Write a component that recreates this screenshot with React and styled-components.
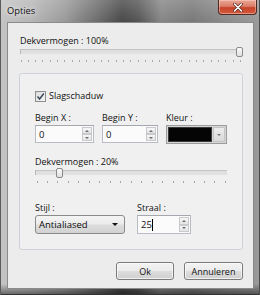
import React from "react";
import styled, { createGlobalStyle } from "styled-components";

const Global = createGlobalStyle`
  html, body { margin: 0; padding: 0; background: #6a6a6a; }
  body { font-family: "Open Sans", "Noto Sans", sans-serif; }
  * { box-sizing: border-box; }
`;

const Window = styled.div`
  width: 260px;
  height: 295px;
  display: flex;
  flex-direction: column;
  padding: 0 6px 6px 7px;
  background:
    linear-gradient(180deg, rgba(0,0,0,0) 0, rgba(0,0,0,0) 284px, rgba(0,0,0,0.5) 295px),
    linear-gradient(180deg, rgba(255,255,255,0.18) 0, rgba(255,255,255,0) 22px),
    linear-gradient(90deg, #c4c4c4 0%, #b6b6b6 12%, #999 25%, #6a6a6a 38%, #484848 47%, #555 53%, #858585 62%, #787878 74%, #8a8a8a 86%, #9a9a9a 100%);
  box-shadow: inset 1px 0 0 #5a5a5a, inset -1px 0 0 #4a4a4a, inset 0 -1px 0 #333;
`;

const TitleBar = styled.div`
  height: 22px;
  display: flex;
  align-items: flex-start;
`;

const Title = styled.div`
  margin-top: 4px;
  font-size: 9.3px;
  line-height: 13px;
  color: #111;
  text-shadow: 0 0 4px rgba(255,255,255,0.9), 0 0 8px rgba(255,255,255,0.6);
`;

const CloseButton = styled.div`
  margin-left: auto;
  margin-right: -3px;
  width: 39px;
  height: 15px;
  border: 1px solid #4e2a22;
  border-top: none;
  border-radius: 0 0 4px 4px;
  background: linear-gradient(180deg, #eaa696 0%, #dc7d68 45%, #c7432a 55%, #d55a3c 100%);
  display: flex;
  align-items: center;
  justify-content: center;
  box-shadow: inset 0 0 0 1px rgba(255,220,210,0.45);
`;

const Client = styled.div`
  flex: 1;
  display: flex;
  flex-direction: column;
  border: 1px solid #8a8a8a;
  background: #ececec;
  padding: 12px 10px 0 12px;
`;

const Label = styled.div`
  font-size: 9px;
  line-height: 12px;
  color: #111;
  white-space: nowrap;
`;

const SliderWrap = styled.div`
  position: relative;
  width: ${p => p.$w}px;
  padding-top: 2px;
  height: 16px;
`;

const Track = styled.div`
  height: 5px;
  width: ${p => p.$tw}px;
  background: linear-gradient(180deg, #c4c4c4 0, #c4c4c4 1px, #dedede 1px, #e2e2e2 100%);
  border-left: 1px solid #b8b8b8;
`;

const Ticks = styled.div`
  display: flex;
  justify-content: space-between;
  margin-top: 6px;
  padding: 0 ${p => p.$pr}px 0 ${p => p.$pl}px;
`;

const Tick = styled.span`
  width: 1px;
  height: 2px;
  background: #a8a8a8;
`;

const Thumb = styled.div`
  position: absolute;
  top: 0;
  left: ${p => p.$x}px;
  width: 7px;
  height: 10px;
  border: 1px solid #8a8a8a;
  border-radius: 2px;
  background: linear-gradient(180deg, #fbfbfb, #e0e0e0);
`;

function Slider({ width, trackWidth, thumb, ticks, pl, pr }) {
  return (
    <SliderWrap $w={width}>
      <Track $tw={trackWidth} />
      <Ticks $pl={pl} $pr={pr}>
        {Array.from({ length: ticks }).map((_, i) => <Tick key={i} />)}
      </Ticks>
      <Thumb $x={thumb} />
    </SliderWrap>
  );
}

const SliderLabel = styled(Label)`
  margin-top: ${p => p.$mt || 0}px;
`;

const Group = styled.div`
  margin: 10px 0 0 -1px;
  border: 1px solid #cdd3d8;
  border-radius: 3px;
  background: #f0f0f0;
  padding: 16px 0 15px 15px;
  display: flex;
  flex-direction: column;
`;

const CheckRow = styled.div`
  display: flex;
  align-items: center;
  gap: 3px;
  height: 12px;
  font-size: 9px;
  line-height: 12px;
  color: #111;
`;

const CheckBox = styled.div`
  width: 11px;
  height: 11px;
  border: 1px solid #8e8f8f;
  background: linear-gradient(135deg, #dcdcdc, #f6f6f6);
  display: flex;
  align-items: center;
  justify-content: center;
`;

const FieldRow = styled.div`
  display: flex;
  gap: ${p => p.$gap}px;
  margin-top: ${p => p.$mt}px;
`;

const Field = styled.div`
  width: ${p => p.$w}px;
  display: flex;
  flex-direction: column;
  gap: ${p => p.$gap || 1}px;
`;

const SpinBox = styled.div`
  height: ${p => p.$h || 18}px;
  display: flex;
  align-items: stretch;
  border: 1px solid #b9bcc2;
  border-top-color: #a4a7ad;
  background: #fbfbfb;
`;

const SpinValue = styled.div`
  flex: 1;
  font-size: 9.5px;
  line-height: 15px;
  padding-left: 3px;
  color: #111;
  display: flex;
  align-items: center;
`;

const Caret = styled.span`
  width: 1px;
  height: 12px;
  background: #000;
`;

const Spinner = styled.div`
  width: 10px;
  margin: 1px 1px 1px 0;
  display: flex;
  flex-direction: column;
`;

const SpinBtn = styled.div`
  flex: 1;
  border: 1px solid #c8cacd;
  background: linear-gradient(180deg, #f7f7f7, #e4e4e4);
  display: flex;
  align-items: center;
  justify-content: center;
  &::after {
    content: "";
    border-left: 2px solid transparent;
    border-right: 2px solid transparent;
    ${p => p.$up ? "border-bottom: 2px solid #6a6a6a;" : "border-top: 2px solid #6a6a6a;"}
  }
`;

const ColorCombo = styled.div`
  height: 19px;
  display: flex;
  border: 1px solid #9c9c9c;
  background: #d6d6d6;
  padding: 1px;
  gap: 1px;
`;

const Swatch = styled.div`
  flex: 1;
  background: #050505;
  border: 1px solid #3a3a3a;
`;

const ColorDrop = styled.div`
  width: 12px;
  background: linear-gradient(180deg, #ececec, #d9d9d9);
  border: 1px solid #c4c4c4;
  display: flex;
  align-items: center;
  justify-content: center;
  &::after {
    content: "";
    border-left: 2px solid transparent;
    border-right: 2px solid transparent;
    border-top: 2px solid #777;
  }
`;

const Combo = styled.div`
  height: 19px;
  display: flex;
  align-items: center;
  justify-content: space-between;
  padding: 0 6px 0 3px;
  border: 1px solid #8b8b8b;
  border-radius: 3px;
  background: linear-gradient(180deg, #f4f4f4 0%, #ebebeb 48%, #dddddd 52%, #d2d2d2 100%);
  font-size: 9.5px;
  color: #0a0a0a;
  &::after {
    content: "";
    border-left: 3px solid transparent;
    border-right: 3px solid transparent;
    border-top: 3px solid #111;
  }
`;

const Buttons = styled.div`
  display: flex;
  justify-content: flex-end;
  gap: 10px;
  margin-top: 12px;
`;

const Button = styled.div`
  width: ${p => p.$w}px;
  height: 18px;
  border: 1px solid #7a7a7a;
  border-radius: 3px;
  background: linear-gradient(180deg, #f3f3f3 0%, #ebebeb 48%, #dddddd 52%, #cfcfcf 100%);
  box-shadow: inset 0 0 0 1px rgba(255,255,255,0.7);
  display: flex;
  align-items: center;
  justify-content: center;
  font-size: 9px;
  color: #111;
`;

export default function App() {
  return (
    <>
      <Global />
      <Window>
        <TitleBar>
          <Title>Opties</Title>
          <CloseButton>
            <svg width="10" height="9" viewBox="0 0 10 9">
              <path d="M1.5 1 L8.5 8 M8.5 1 L1.5 8" stroke="#5a2a20" strokeWidth="3" strokeLinecap="round" />
              <path d="M1.5 1 L8.5 8 M8.5 1 L1.5 8" stroke="#ffffff" strokeWidth="1.6" strokeLinecap="round" />
            </svg>
          </CloseButton>
        </TitleBar>
        <Client>
          <Label>Dekvermogen : 100%</Label>
          <Slider width={223} trackWidth={222} thumb={216} ticks={31} pl={0.5} pr={2} />
          <Group>
            <CheckRow>
              <CheckBox>
                <svg width="9" height="9" viewBox="0 0 9 9">
                  <path d="M1.5 4.5 L3.6 7 L7.8 1.5" fill="none" stroke="#3c4a5e" strokeWidth="1.5" />
                </svg>
              </CheckBox>
              Slagschaduw
            </CheckRow>
            <FieldRow $gap={8} $mt={10}>
              <Field $w={59}>
                <Label>Begin X :</Label>
                <SpinBox>
                  <SpinValue>0</SpinValue>
                  <Spinner><SpinBtn $up /><SpinBtn /></Spinner>
                </SpinBox>
              </Field>
              <Field $w={56}>
                <Label>Begin Y :</Label>
                <SpinBox>
                  <SpinValue>0</SpinValue>
                  <Spinner><SpinBtn $up /><SpinBtn /></Spinner>
                </SpinBox>
              </Field>
              <Field $w={61}>
                <Label>Kleur :</Label>
                <ColorCombo>
                  <Swatch />
                  <ColorDrop />
                </ColorCombo>
              </Field>
            </FieldRow>
            <SliderLabel $mt={12}>Dekvermogen : 20%</SliderLabel>
            <Slider width={192} trackWidth={192} thumb={21} ticks={19} pl={1.5} pr={1} />
            <FieldRow $gap={12} $mt={18}>
              <Field $w={90} $gap={0}>
                <Label>Stijl :</Label>
                <Combo>Antialiased</Combo>
              </Field>
              <Field $w={54} $gap={0}>
                <Label>Straal :</Label>
                <SpinBox $h={19}>
                  <SpinValue>25<Caret /></SpinValue>
                  <Spinner><SpinBtn $up /><SpinBtn /></Spinner>
                </SpinBox>
              </Field>
            </FieldRow>
          </Group>
          <Buttons>
            <Button $w={58}>Ok</Button>
            <Button $w={59}>Annuleren</Button>
          </Buttons>
        </Client>
      </Window>
    </>
  );
}
